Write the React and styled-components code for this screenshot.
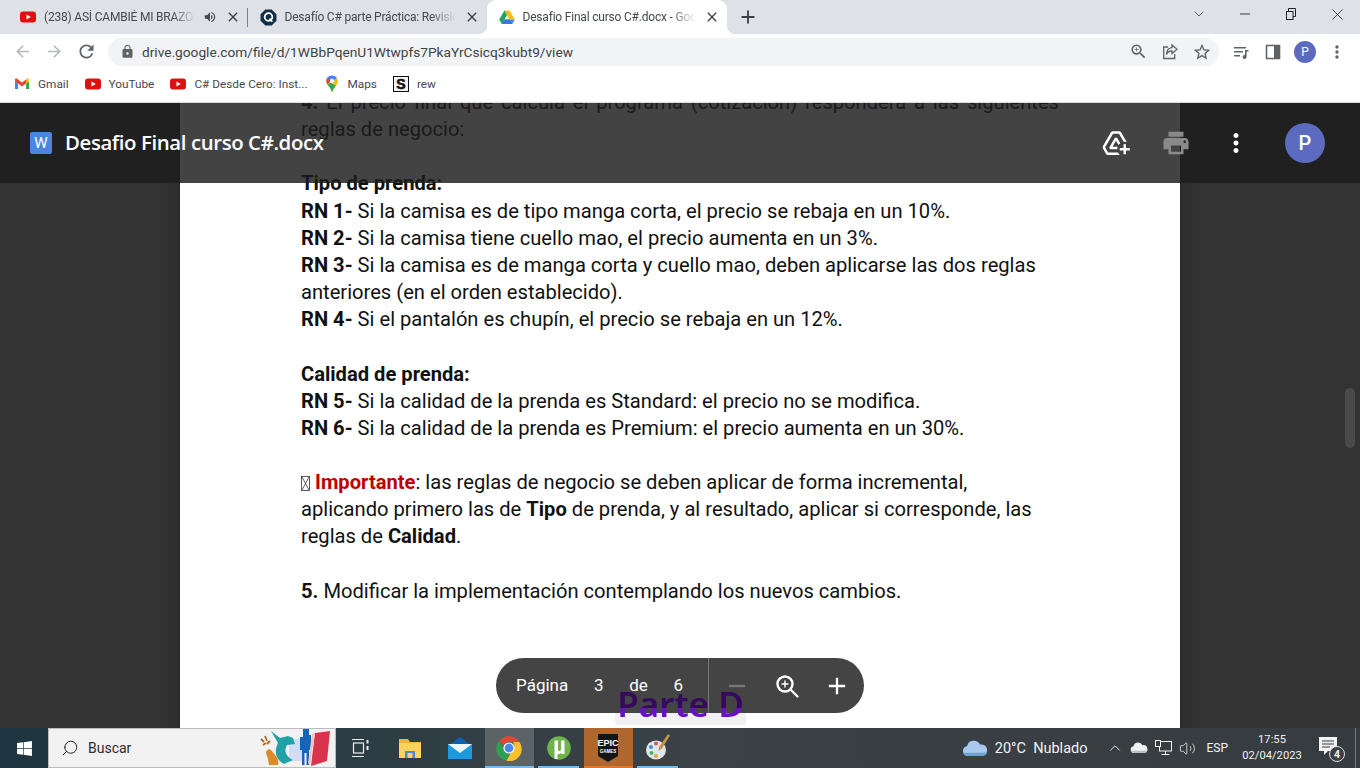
import React from "react";
import styled, { createGlobalStyle } from "styled-components";
import {
  MdArrowBack,
  MdArrowForward,
  MdRefresh,
  MdLock,
  MdZoomIn,
  MdStarBorder,
  MdMoreVert,
  MdPrint,
  MdAddToDrive,
  MdClose,
  MdAdd,
  MdRemove,
  MdVolumeUp,
} from "react-icons/md";
import { FaWindows } from "react-icons/fa";
import { ChevronDown, ChevronUp, Minus, X, Search, Volume2 } from "lucide-react";

const GlobalStyle = createGlobalStyle`
  html, body {
    margin: 0;
    padding: 0;
    overflow: hidden;
    background: #333;
  }
  * {
    box-sizing: border-box;
  }
`;

const Screen = styled.div`
  width: 1360px;
  height: 768px;
  display: flex;
  flex-direction: column;
  overflow: hidden;
  font-family: Roboto, "Liberation Sans", sans-serif;
`;

/* ---------- chrome tabs ---------- */

const TabStrip = styled.div`
  height: 34px;
  flex: none;
  display: flex;
  align-items: stretch;
  padding-left: 8px;
  background: #dee1e6;
`;

const Tab = styled.div`
  position: relative;
  width: ${(p) => p.$width}px;
  display: flex;
  align-items: center;
  gap: 8px;
  padding: 0 7px 0 12px;
  font-size: 12px;
  letter-spacing: -0.2px;
  color: #45494f;
  background: ${(p) => (p.$active ? "#fff" : "transparent")};
  border-radius: ${(p) => (p.$active ? "9px 9px 0 0" : "0")};

  ${(p) =>
    p.$active &&
    `
    &::before, &::after {
      content: "";
      position: absolute;
      bottom: 0;
      width: 9px;
      height: 9px;
      background: #fff;
    }
    &::before { left: -9px; -webkit-mask: radial-gradient(circle at 0 0, transparent 9px, #000 9.5px); mask: radial-gradient(circle at 0 0, transparent 9px, #000 9.5px); }
    &::after { right: -9px; -webkit-mask: radial-gradient(circle at 100% 0, transparent 9px, #000 9.5px); mask: radial-gradient(circle at 100% 0, transparent 9px, #000 9.5px); }
  `}

  ${(p) =>
    p.$separated &&
    `
    &::after {
      content: "";
      position: absolute;
      right: 0;
      top: 8px;
      height: 19px;
      width: 1px;
      background: #7d8187;
    }
  `}
`;

const TabTitle = styled.span`
  flex: 1;
  min-width: 0;
  white-space: nowrap;
  overflow: hidden;
  -webkit-mask-image: linear-gradient(to right, #000 85%, transparent 100%);
  mask-image: linear-gradient(to right, #000 85%, transparent 100%);
`;

const TabClose = styled(MdClose)`
  flex: none;
  width: 16px;
  height: 16px;
  color: #3c4043;
`;

const NewTab = styled(MdAdd)`
  width: 22px;
  height: 22px;
  margin: 6px 0 0 10px;
  color: #3c4043;
`;

const WindowControls = styled.div`
  margin-left: auto;
  display: flex;
  align-items: flex-start;
`;

const WindowButton = styled.div`
  width: 46px;
  height: 28px;
  display: flex;
  align-items: center;
  justify-content: center;
  color: #202124;
`;

/* ---------- address bar ---------- */

const Toolbar = styled.div`
  height: 35px;
  flex: none;
  display: flex;
  align-items: center;
  padding-left: 6px;
  background: #fff;
`;

const ToolButton = styled.div`
  width: 32px;
  height: 28px;
  flex: none;
  display: flex;
  align-items: center;
  justify-content: center;
  color: ${(p) => p.$color || "#5f6368"};
`;

const Omnibox = styled.div`
  width: 1111px;
  height: 28px;
  margin: 0 6px;
  padding: 0 1px 0 12px;
  display: flex;
  align-items: center;
  border-radius: 14px;
  background: #f1f3f4;
`;

const Url = styled.span`
  flex: 1;
  margin-left: 7px;
  font-size: 13.7px;
  color: #3f4347;
`;

const Avatar = styled.div`
  width: ${(p) => p.$size}px;
  height: ${(p) => p.$size}px;
  border-radius: 50%;
  display: flex;
  align-items: center;
  justify-content: center;
  font-size: ${(p) => p.$font}px;
  font-weight: ${(p) => p.$weight || 400};
  color: #fff;
  background: #5c6bc0;
`;

/* ---------- bookmarks ---------- */

const Bookmarks = styled.div`
  height: 34px;
  flex: none;
  display: flex;
  align-items: center;
  gap: 16px;
  padding: 0 0 3px 14px;
  background: #fff;
  border-bottom: 1px solid #d9dbde;
`;

const Bookmark = styled.div`
  display: flex;
  align-items: center;
  gap: 8px;
  font-size: 11.8px;
  color: #45494f;
`;

/* ---------- drive viewer ---------- */

const Viewer = styled.div`
  position: relative;
  flex: 1;
  min-height: 0;
  overflow: hidden;
  background: #333;
`;

const Page = styled.div`
  width: 1000px;
  margin: -14px 0 0 180px;
  padding: 0 121px;
  height: 900px;
  background: #fff;
  box-shadow: 0 0 18px rgba(0, 0, 0, 0.28);
  font-size: 20.15px;
  line-height: 27.15px;
  color: #111;
`;

const Para = styled.p`
  margin: 0 0 27.15px;
  text-align: ${(p) => (p.$justify ? "justify" : "left")};
`;

const Important = styled.b`
  color: #c00000;
  font-weight: 700;
`;

const Tofu = styled.svg`
  width: 9px;
  height: 15px;
  margin-right: 5px;
  vertical-align: -2px;
`;

const Header = styled.div`
  position: absolute;
  top: 0;
  left: 0;
  right: 0;
  height: 80px;
  display: flex;
  align-items: center;
  padding: 0 25px 0 30px;
  background: rgba(29, 29, 29, 0.83);
`;

const DocBadge = styled.div`
  width: 22px;
  height: 22px;
  border-radius: 2px;
  display: flex;
  align-items: center;
  justify-content: center;
  font-size: 15px;
  color: #fff;
  background: #4a86e0;
`;

const DocTitle = styled.span`
  margin: 0 0 2px 13px;
  font-family: "Open Sans", Roboto, sans-serif;
  font-size: 20.4px;
  font-weight: 600;
  letter-spacing: -0.4px;
  color: #fff;
`;

const HeaderActions = styled.div`
  margin-left: auto;
  display: flex;
  align-items: center;
`;

const HeaderButton = styled.div`
  width: 60px;
  height: 40px;
  margin-left: ${(p) => p.$gap || 0}px;
  display: flex;
  align-items: center;
  justify-content: center;
  color: ${(p) => p.$color || "#fff"};
`;

const Scrollbar = styled.div`
  position: absolute;
  top: 285px;
  right: 5px;
  width: 10px;
  height: 60px;
  border-radius: 5px;
  background: #4a4a4a;
`;

const Pager = styled.div`
  position: absolute;
  left: 496px;
  bottom: 15px;
  width: 368px;
  height: 55px;
  display: flex;
  align-items: center;
  border-radius: 28px;
  color: #fff;
  background: #444;
`;

const PageInfo = styled.div`
  width: 213px;
  height: 100%;
  padding: 0 25px 2px 20px;
  display: flex;
  align-items: center;
  justify-content: space-between;
  font-size: 17px;
  border-right: 1px solid #777;
`;

const ZoomControls = styled.div`
  flex: 1;
  display: flex;
  align-items: center;
  justify-content: space-between;
  padding: 0 12px 0 13px;
`;

const ZoomButton = styled.div`
  width: 30px;
  height: 30px;
  display: flex;
  align-items: center;
  justify-content: center;
  color: ${(p) => p.$color || "#fff"};
`;

const Stamp = styled.div`
  position: absolute;
  left: 615px;
  bottom: 3px;
  width: 131px;
  height: 40px;
  text-align: center;
  font-family: "Noto Sans", sans-serif;
  font-size: 35px;
  line-height: 38px;
  font-weight: 600;
  white-space: nowrap;
  background: linear-gradient(to bottom, transparent 28px, #f1f1f4 28px);
`;

const StampText = styled.span`
  color: transparent;
  background: linear-gradient(to bottom, #34095e 28px, #6a10c4 28px);
  -webkit-background-clip: text;
  background-clip: text;
`;

/* ---------- windows taskbar ---------- */

const Taskbar = styled.div`
  height: 40px;
  flex: none;
  display: flex;
  align-items: stretch;
  color: #fff;
  background: linear-gradient(to right, #1d3540 0, #2b3c44 340px, #3b4246 700px, #363b3f 100%);
`;

const StartButton = styled.div`
  width: 48px;
  display: flex;
  align-items: center;
  justify-content: center;
`;

const SearchBox = styled.div`
  width: 288px;
  display: flex;
  align-items: center;
  padding: 0 4px 0 12px;
  font-size: 14px;
  color: #2b2b2b;
  background: #f2f2f2;
  border: 1px solid #b8bcbe;
`;

const SearchLabel = styled.span`
  flex: 1;
  margin-left: 9px;
`;

const SearchGlass = styled(Search)`
  transform: scaleX(-1);
`;

const TaskItem = styled.div`
  position: relative;
  width: 49.5px;
  display: flex;
  align-items: center;
  justify-content: center;
  background: ${(p) => p.$bg || "transparent"};

  ${(p) =>
    p.$open &&
    `
    &::after {
      content: "";
      position: absolute;
      left: ${p.$flush ? 0 : 4}px;
      right: ${p.$flush ? 0 : 5}px;
      bottom: 0;
      height: 2px;
      background: ${p.$open};
    }
  `}
`;

const Tray = styled.div`
  margin-left: auto;
  display: flex;
  align-items: center;
  font-size: 13px;
  color: #f2f2f2;
`;

const WeatherText = styled.span`
  margin: 0 16px 0 7px;
  font-size: 14.5px;
  white-space: nowrap;
`;

const TrayIcon = styled.div`
  width: 24px;
  display: flex;
  justify-content: center;
`;

const TrayLang = styled.span`
  margin: 0 14px 0 7px;
  font-size: 12px;
`;

const Clock = styled.div`
  width: 60px;
  text-align: center;
  font-size: 11.2px;
  line-height: 16px;
`;

const Notify = styled.div`
  position: relative;
  width: 22px;
  height: 22px;
  margin: 0 14px 0 17px;
`;

const NotifyBadge = styled.span`
  position: absolute;
  right: -4px;
  bottom: -3px;
  width: 16px;
  height: 16px;
  display: flex;
  align-items: center;
  justify-content: center;
  font-size: 10.5px;
  font-weight: 700;
  border: 1px solid #ddd;
  border-radius: 50%;
  background: #3a3f43;
`;

const ShowDesktop = styled.div`
  width: 1px;
  height: 40px;
  background: #777;
  margin-right: 4px;
`;

/* ---------- drawings ---------- */

const YouTubeIcon = () => (
  <svg width="16" height="16" viewBox="0 0 16 16">
    <rect x="0" y="2.5" width="16" height="11" rx="3" fill="#e01010" />
    <path d="M6.5 5.5v5l4.3-2.5z" fill="#fff" />
  </svg>
);

const QIcon = () => (
  <svg width="17" height="17" viewBox="0 0 16 16">
    <path d="M5 .5h6L15.500 5v6L11 15.500H5L.5 11V5z" fill="#0f2f4a" />
    <circle cx="8" cy="7.500" r="3.600" fill="none" stroke="#fff" strokeWidth="1.700" />
    <path d="M9 9l2.500 3" stroke="#fff" strokeWidth="1.700" />
  </svg>
);

const DriveIcon = () => (
  <svg width="16" height="16" viewBox="0 0 16 16">
    <path d="M5.4 1.5h5.2L15.8 10.5h-5.2z" fill="#f9bc15" />
    <path d="M5.4 1.5L.2 10.5l2.6 4.4L8 6z" fill="#1fa463" />
    <path d="M5.4 10.5h10.4l-2.6 4.4H2.8z" fill="#4285f4" />
    <path d="M5.4 10.5h5l2.8 4.4H2.8z" fill="#3b77e0" />
  </svg>
);

const GmailIcon = () => (
  <svg width="16" height="16" viewBox="0 0 16 16">
    <path d="M1 13V4.2L8 9.4l7-5.2V13h-3V7.6L8 10.6 4 7.6V13z" fill="#d9d9d9" />
    <path d="M1 13h3V7.6L1 5.2z" fill="#4285f4" />
    <path d="M12 13h3V5.2l-3 2.4z" fill="#34a853" />
    <path d="M12 3.6V7.6l3-2.4V3.8c0-1.2-1.4-1.8-2.2-1z" fill="#fbbc04" />
    <path d="M1 5.2L4 7.6 8 10.6l4-3V3.6L8 6.6 3.2 2.8C2.2 2 1 2.6 1 3.8z" fill="#ea4335" />
  </svg>
);

const MapsIcon = () => (
  <svg width="16" height="18" viewBox="0 0 16 18">
    <path d="M8 .5C5.8.5 4 1.4 3 3l5 5 5-5C12 1.4 10.2.5 8 .5z" fill="#4285f4" />
    <path d="M3 3C2.4 3.9 2.2 5 2.2 5.9c0 1.4.5 2.6 1.2 3.6L8 5z" fill="#ea4335" />
    <path d="M13 3L8 8 3.4 9.5C5 11.7 7 13.5 8 17.5c.7-3 2.4-5 3.9-6.8 1-1.3 1.9-2.8 1.9-4.8 0-1-.3-2-.8-2.9z" fill="#fbbc04" />
    <path d="M8 17.5c.7-3 2.4-5 3.9-6.8L6 7.5 3.4 9.5C5 11.7 7 13.5 8 17.5z" fill="#34a853" />
    <circle cx="8" cy="5.9" r="2.1" fill="#fff" />
  </svg>
);

const RewIcon = () => (
  <svg width="16" height="16" viewBox="0 0 16 16">
    <rect x="0.5" y="0.5" width="15" height="15" fill="#f2f2f2" stroke="#111" />
    <text x="8" y="13" textAnchor="middle" fontSize="14" fontWeight="700" fontFamily="Liberation Sans, sans-serif" fill="#111" stroke="#111" strokeWidth="0.6">
      S
    </text>
  </svg>
);

const ShareIcon = () => (
  <svg width="18" height="18" viewBox="0 0 18 18" fill="none" stroke="#5f6368" strokeWidth="1.3">
    <path d="M7 4H2.700v11.500h11V11" />
    <path d="M11 2l5 4.300-5 4.200V8C8.500 8 6.500 9 5.500 11.500 5.700 8 7.800 5 11 4.700z" />
  </svg>
);

const MediaIcon = () => (
  <svg width="18" height="18" viewBox="0 0 18 18">
    <path d="M2 4h12v1.600H2zM2 8h9v1.600H2zM2 12h6v1.600H2z" fill="#5f6368" />
    <path d="M13 7h3.500v1.600H14.600V14a2 2 0 1 1-1.600-2z" fill="#5f6368" />
  </svg>
);

const SidePanelIcon = () => (
  <svg width="16" height="16" viewBox="0 0 16 16">
    <path d="M1.500 1.500h13v13h-13z" fill="#fff" stroke="#5f6368" strokeWidth="1.600" />
    <rect x="9" y="1.500" width="5.500" height="13" fill="#5f6368" />
  </svg>
);

const RestoreIcon = () => (
  <svg width="12" height="12" viewBox="0 0 12 12" fill="none" stroke="#202124">
    <rect x="1.500" y="3.500" width="6.500" height="8" />
    <path d="M3.500 3.500V.5h7v8H8" />
  </svg>
);

const ZoomIcon = () => (
  <svg width="26" height="26" viewBox="0 0 26 26" fill="none" stroke="#fff" strokeWidth="2.400">
    <circle cx="11" cy="11" r="7.500" />
    <path d="M16.500 16.500l7 7" strokeLinecap="round" />
    <path d="M11 7.500v7M7.500 11h7" strokeWidth="1.500" />
  </svg>
);

const DoodleIcon = () => (
  <svg width="72" height="38" viewBox="0 0 72 38">
    <path d="M30 10h14v22H30z" fill="#d3dcf5" />
    <path d="M7 24c0-3 3-5 5-3l4 5c3 3 4 7 3 10h-9l-1-6z" fill="#d98a2b" />
    <path d="M2 10l3 3M6 7l2 5M11 12l-3 3M4 16l3-2" stroke="#b06a1c" strokeWidth="1.800" />
    <path d="M12 2l9 7 8-2 5 2 2 6-8 1c-3 5-2 11 6 15l-9 4c-9-5-10-13-6-21z" fill="#21a0a6" />
    <path d="M44 0h6v6h2v15h-2v15h-2.500V24h-2v12H43V21h-2V8h3z" fill="#1763b8" />
    <path d="M56 4l15-2-3 30-16 5z" fill="#d8344e" />
    <path d="M56 4l-5 32-2-2 4-29z" fill="#f1c7b5" />
  </svg>
);

const TaskViewIcon = () => (
  <svg width="20" height="20" viewBox="0 0 20 20" fill="none" stroke="#eee" strokeWidth="1.200">
    <path d="M1 1.500h12M1 18.500h12" />
    <rect x="2.500" y="5" width="10" height="10" />
    <path d="M16.500 2v3.500M16.500 8v4" strokeWidth="2" />
  </svg>
);

const FolderIcon = () => (
  <svg width="24" height="24" viewBox="0 0 24 24">
    <path d="M1 3h9l2 3h11v15H1z" fill="#f0b43c" />
    <rect x="1" y="7" width="22" height="15" fill="#fbd45f" />
    <rect x="7" y="15" width="10" height="7" fill="#4a8ac8" />
    <rect x="9.500" y="17" width="5" height="5" fill="#fbd45f" />
  </svg>
);

const MailIcon = () => (
  <svg width="26" height="26" viewBox="0 0 26 26">
    <path d="M13 2L1 11v13h24V11z" fill="#0c62b0" />
    <rect x="1" y="9" width="24" height="15" fill="#1a9be0" />
    <path d="M1 9h24L13 18z" fill="#e9f4fb" />
  </svg>
);

const ChromeIcon = () => (
  <svg width="26" height="26" viewBox="0 0 26 26">
    <path d="M13 1a12 12 0 0 1 10.400 6H13a6 6 0 0 0-5.500 3.600L3.400 5.800A12 12 0 0 1 13 1z" fill="#e04535" />
    <path d="M3.400 5.800l5.200 9.200a6 6 0 0 0 5 4l-3.200 6.700A12 12 0 0 1 3.400 5.800z" fill="#2f9e50" />
    <path d="M23.400 7A12 12 0 0 1 10.400 25.700L16 15.500A6 6 0 0 0 17 7z" fill="#fbc02d" />
    <circle cx="13" cy="13" r="5.600" fill="#fff" />
    <circle cx="13" cy="13" r="4.400" fill="#4a89e8" />
  </svg>
);

const TorrentIcon = () => (
  <svg width="24" height="26" viewBox="0 0 24 26">
    <circle cx="12" cy="13" r="11.800" fill="#6fb44a" />
    <path d="M7.500 5.500h3.500v9c0 2 2.500 2 3 .3V5.500h3.500V19h-3.300v-1.500c-1.200 1.800-3 2-3.700 1.400V24H7.500z" fill="#fff" />
  </svg>
);

const EpicIcon = () => (
  <svg width="24" height="30" viewBox="0 0 24 30">
    <path d="M2 1h20v22l-10 6-10-6z" fill="#151515" />
    <text x="12" y="13" textAnchor="middle" fill="#fff" fontSize="9" fontWeight="700" fontFamily="Liberation Sans, sans-serif">
      EPIC
    </text>
    <text x="12" y="20" textAnchor="middle" fill="#fff" fontSize="4.500" fontWeight="700" fontFamily="Liberation Sans, sans-serif">
      GAMES
    </text>
  </svg>
);

const PaintIcon = () => (
  <svg width="26" height="30" viewBox="0 0 26 30">
    <ellipse cx="11" cy="17" rx="10" ry="9.500" fill="#dfe6ea" />
    <circle cx="6" cy="14" r="2" fill="#3f8fe0" />
    <circle cx="6.500" cy="20" r="2" fill="#52b35a" />
    <circle cx="11" cy="23" r="2" fill="#e8a33d" />
    <circle cx="11" cy="10.500" r="2" fill="#d9534f" />
    <path d="M23 1l2 1.500-8 13-3.500 2.500.5-4z" fill="#c8924a" />
  </svg>
);

const CloudIcon = ({ width, color, shade }) => (
  <svg width={width} height={width * 0.62} viewBox="0 0 26 16">
    <path d="M6 16a5 5 0 0 1-1-9.900A7 7 0 0 1 18 4.500 5.800 5.800 0 0 1 20.500 16z" fill={color} />
    <path d="M6 16a5 5 0 0 1-4.700-3.300h24A5.800 5.800 0 0 1 20.500 16z" fill={shade} />
  </svg>
);

const NetworkIcon = () => (
  <svg width="17" height="16" viewBox="0 0 17 16" fill="none" stroke="#f2f2f2">
    <rect x="4.500" y="1.500" width="12" height="9.500" />
    <rect x="0.500" y="0.500" width="5" height="6" fill="#363b3f" />
    <path d="M10.500 11v3M6.500 14.500h8" />
  </svg>
);

const NotifyIcon = () => (
  <svg width="20" height="18" viewBox="0 0 20 18">
    <path d="M0 0h18v14h-9l-4 4v-4H0z" fill="#f2f2f2" />
    <path d="M3 4h12M3 7h12M3 10h8" stroke="#363b3f" strokeWidth="1" />
  </svg>
);

export default function App() {
  return (
    <Screen>
      <GlobalStyle />

      <TabStrip>
        <Tab $width={239.5} $separated>
          <YouTubeIcon />
          <TabTitle>(238) ASÍ CAMBIÉ MI BRAZO CON ESTE EJERCICIO</TabTitle>
          <MdVolumeUp size={14} color="#45494f" />
          <TabClose />
        </Tab>
        <Tab $width={239}>
          <QIcon />
          <TabTitle>Desafío C# parte Práctica: Revisión del proyecto</TabTitle>
          <TabClose />
        </Tab>
        <Tab $width={240} $active>
          <DriveIcon />
          <TabTitle>Desafio Final curso C#.docx - Google Drive</TabTitle>
          <TabClose />
        </Tab>
        <NewTab />
        <WindowControls>
          <WindowButton>
            <ChevronDown size={16} strokeWidth={1} />
          </WindowButton>
          <WindowButton>
            <Minus size={16} strokeWidth={1.3} />
          </WindowButton>
          <WindowButton>
            <RestoreIcon />
          </WindowButton>
          <WindowButton>
            <X size={19} strokeWidth={1} />
          </WindowButton>
        </WindowControls>
      </TabStrip>

      <Toolbar>
        <ToolButton $color="#b4b7bb">
          <MdArrowBack size={19} />
        </ToolButton>
        <ToolButton $color="#b4b7bb">
          <MdArrowForward size={19} />
        </ToolButton>
        <ToolButton>
          <MdRefresh size={21} />
        </ToolButton>
        <Omnibox>
          <MdLock size={15} color="#5f6368" />
          <Url>drive.google.com/file/d/1WBbPqenU1Wtwpfs7PkaYrCsicq3kubt9/view</Url>
          <ToolButton>
            <MdZoomIn size={19} />
          </ToolButton>
          <ToolButton>
            <ShareIcon />
          </ToolButton>
          <ToolButton>
            <MdStarBorder size={20} />
          </ToolButton>
        </Omnibox>
        <ToolButton>
          <MediaIcon />
        </ToolButton>
        <ToolButton>
          <SidePanelIcon />
        </ToolButton>
        <ToolButton>
          <Avatar $size={22} $font={12}>
            P
          </Avatar>
        </ToolButton>
        <ToolButton>
          <MdMoreVert size={20} />
        </ToolButton>
      </Toolbar>

      <Bookmarks>
        <Bookmark>
          <GmailIcon />
          Gmail
        </Bookmark>
        <Bookmark>
          <YouTubeIcon />
          YouTube
        </Bookmark>
        <Bookmark>
          <YouTubeIcon />
          C# Desde Cero: Inst...
        </Bookmark>
        <Bookmark>
          <MapsIcon />
          Maps
        </Bookmark>
        <Bookmark>
          <RewIcon />
          rew
        </Bookmark>
      </Bookmarks>

      <Viewer>
        <Page>
          <Para $justify>
            <b>4.</b> El precio final que calcula el programa (cotización) responderá a las siguientes
            reglas de negocio:
          </Para>
          <Para>
            <b>Tipo de prenda:</b>
            <br />
            <b>RN 1-</b> Si la camisa es de tipo manga corta, el precio se rebaja en un 10%.
            <br />
            <b>RN 2-</b> Si la camisa tiene cuello mao, el precio aumenta en un 3%.
            <br />
            <b>RN 3-</b> Si la camisa es de manga corta y cuello mao, deben aplicarse las dos reglas
            <br />
            anteriores (en el orden establecido).
            <br />
            <b>RN 4-</b> Si el pantalón es chupín, el precio se rebaja en un 12%.
          </Para>
          <Para>
            <b>Calidad de prenda:</b>
            <br />
            <b>RN 5-</b> Si la calidad de la prenda es Standard: el precio no se modifica.
            <br />
            <b>RN 6-</b> Si la calidad de la prenda es Premium: el precio aumenta en un 30%.
          </Para>
          <Para>
            <Tofu viewBox="0 0 9 15" fill="none" stroke="#333" strokeWidth="0.8">
              <rect x="0.5" y="0.5" width="8" height="14" />
              <path d="M1 1l7 13M8 1L1 14" />
            </Tofu>
            <Important>Importante</Important>: las reglas de negocio se deben aplicar de forma incremental,
            <br />
            aplicando primero las de <b>Tipo</b> de prenda, y al resultado, aplicar si corresponde, las
            <br />
            reglas de <b>Calidad</b>.
          </Para>
          <Para>
            <b>5.</b> Modificar la implementación contemplando los nuevos cambios.
          </Para>
        </Page>

        <Header>
          <DocBadge>W</DocBadge>
          <DocTitle>Desafio Final curso C#.docx</DocTitle>
          <HeaderActions>
            <HeaderButton>
              <MdAddToDrive size={30} />
            </HeaderButton>
            <HeaderButton $color="#8a8a8a">
              <MdPrint size={30} />
            </HeaderButton>
            <HeaderButton>
              <MdMoreVert size={30} />
            </HeaderButton>
            <HeaderButton $gap={9}>
              <Avatar $size={40} $font={20} $weight={500}>
                P
              </Avatar>
            </HeaderButton>
          </HeaderActions>
        </Header>

        <Scrollbar />

        <Pager>
          <PageInfo>
            <span>Página</span>
            <span>3</span>
            <span>de</span>
            <span>6</span>
          </PageInfo>
          <ZoomControls>
            <ZoomButton $color="#777">
              <MdRemove size={28} />
            </ZoomButton>
            <ZoomButton>
              <ZoomIcon />
            </ZoomButton>
            <ZoomButton>
              <MdAdd size={28} />
            </ZoomButton>
          </ZoomControls>
        </Pager>

        <Stamp>
          <StampText>Parte D</StampText>
        </Stamp>
      </Viewer>

      <Taskbar>
        <StartButton>
          <FaWindows size={17} />
        </StartButton>
        <SearchBox>
          <SearchGlass size={18} strokeWidth={1.3} color="#222" />
          <SearchLabel>Buscar</SearchLabel>
          <DoodleIcon />
        </SearchBox>
        <TaskItem>
          <TaskViewIcon />
        </TaskItem>
        <TaskItem>
          <FolderIcon />
        </TaskItem>
        <TaskItem>
          <MailIcon />
        </TaskItem>
        <TaskItem $bg="#5c6367" $open="#76b9ed" $flush>
          <ChromeIcon />
        </TaskItem>
        <TaskItem $open="#76b9ed">
          <TorrentIcon />
        </TaskItem>
        <TaskItem $bg="#b0672e" $open="#e8742a" $flush>
          <EpicIcon />
        </TaskItem>
        <TaskItem $open="#76b9ed">
          <PaintIcon />
        </TaskItem>

        <Tray>
          <CloudIcon width={26} color="#a9c8ee" shade="#6f9fe0" />
          <WeatherText>20°C&nbsp;&nbsp;Nublado</WeatherText>
          <TrayIcon>
            <ChevronUp size={18} strokeWidth={1.2} />
          </TrayIcon>
          <TrayIcon>
            <CloudIcon width={18} color="#f2f2f2" shade="#bbb" />
          </TrayIcon>
          <TrayIcon>
            <NetworkIcon />
          </TrayIcon>
          <TrayIcon>
            <Volume2 size={17} strokeWidth={1.1} />
          </TrayIcon>
          <TrayLang>ESP</TrayLang>
          <Clock>
            17:55
            <br />
            02/04/2023
          </Clock>
          <Notify>
            <NotifyIcon />
            <NotifyBadge>4</NotifyBadge>
          </Notify>
          <ShowDesktop />
        </Tray>
      </Taskbar>
    </Screen>
  );
}
